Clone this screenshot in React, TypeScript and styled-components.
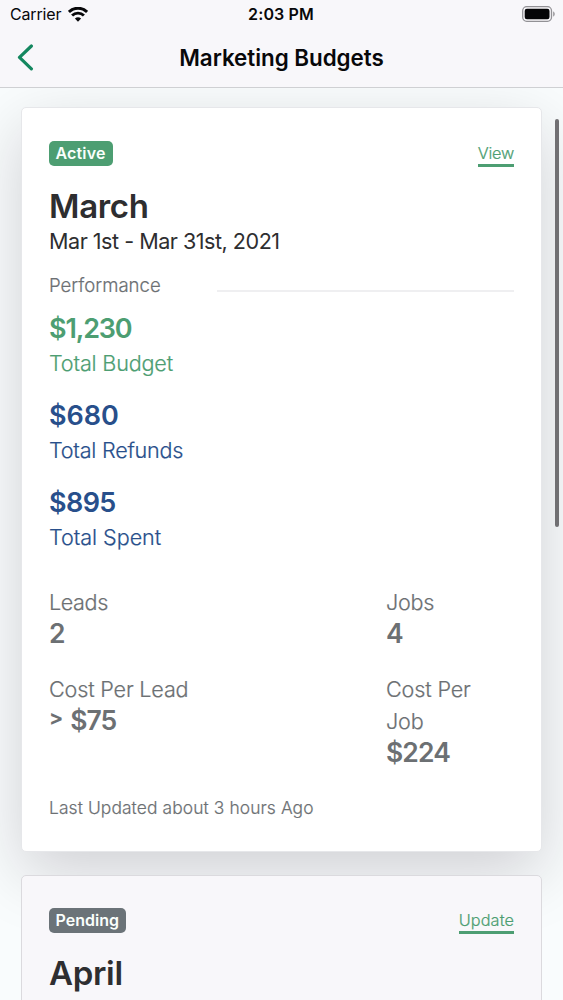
import React from "react";
import styled, { createGlobalStyle } from "styled-components";

const GlobalStyle = createGlobalStyle`
  * { box-sizing: border-box; }
  html, body { margin: 0; height: 1000px; overflow: hidden; background: #f9fcfd; }
  body { font-family: Inter, "Liberation Sans", sans-serif; color: #2e2e30; }
`;

const Screen = styled.div`
  position: relative;
  width: 563px;
  height: 1000px;
  overflow: hidden;
  display: flex;
  flex-direction: column;
`;

const Header = styled.header`
  position: relative;
  z-index: 1;
  flex: none;
  height: 88px;
  background: #f8f7fa;
  border-bottom: 1px solid #cfd0d3;
  color: #08080a;
`;

const StatusBar = styled.div`
  display: grid;
  grid-template-columns: 1fr auto 1fr;
  align-items: center;
  height: 28px;
  padding: 0 7px 0 10px;
  font-size: 16px;
`;

const Carrier = styled.div`
  display: flex;
  align-items: center;
  gap: 7px;
  letter-spacing: -0.15px;
`;

const Time = styled.div`
  position: relative;
  left: -2px;
  font-weight: 600;
  letter-spacing: 0.15px;
`;

const BatterySlot = styled.div`
  display: flex;
  justify-content: flex-end;
`;

const NavBar = styled.nav`
  display: grid;
  grid-template-columns: 60px 1fr 60px;
  align-items: center;
  height: 59px;
`;

const BackButton = styled.button`
  display: flex;
  padding: 0 0 0 17px;
  border: 0;
  background: none;
`;

const Title = styled.h1`
  margin: 0;
  text-align: center;
  font-size: 22.4px;
  font-weight: 600;
  letter-spacing: -0.03px;
`;

const List = styled.main`
  display: flex;
  flex-direction: column;
  gap: 23px;
  padding: 19px 21px 0;
`;

const Card = styled.section<{ $muted?: boolean }>`
  position: relative;
  flex: none;
  padding: ${(p) => (p.$muted ? 32 : 33)}px 27px 30px;
  border: 1px solid ${(p) => (p.$muted ? "#dbdade" : "#e6e7ea")};
  border-radius: 5px;
  background: ${(p) => (p.$muted ? "#f8f7fa" : "#fff")};
  box-shadow: ${(p) => (p.$muted ? "none" : "0 21px 65px rgba(20, 5, 20, 0.175)")};
`;

const CardTop = styled.div`
  display: flex;
  justify-content: space-between;
  height: 25px;
`;

const Badge = styled.span<{ $color: string; $spacing: number }>`
  padding: 0 7px 0 6.5px;
  border-radius: 5px;
  background: ${(p) => p.$color};
  color: #fafffc;
  font-size: 16px;
  font-weight: 600;
  line-height: 25px;
  letter-spacing: ${(p) => p.$spacing}px;
`;

const Action = styled.a<{ $spacing: number }>`
  height: 26px;
  border-bottom: 3px solid #4d9e72;
  color: #4d9e72;
  font-size: 16.3px;
  font-weight: 300;
  -webkit-text-stroke: 0.2px currentColor;
  line-height: 25px;
  letter-spacing: ${(p) => p.$spacing}px;
`;

const Month = styled.h2<{ $spacing: number }>`
  margin: 21px 0 -1px;
  font-size: 33px;
  font-weight: 600;
  line-height: 39px;
  letter-spacing: ${(p) => p.$spacing}px;
`;

const Period = styled.div`
  font-size: 21.6px;
  line-height: 32px;
  letter-spacing: -0.5px;
`;

const SectionHead = styled.div`
  display: grid;
  grid-template-columns: 168px 1fr;
  align-items: center;
  margin: 15px 0 12px;
  font-size: 18.6px;
  font-weight: 300;
  -webkit-text-stroke: 0.2px currentColor;
  line-height: 27px;
  color: #6c7073;
`;

const Rule = styled.div`
  height: 2px;
  margin-top: 11px;
  background: #efeff1;
`;

const Total = styled.div<{ $color: string }>`
  height: 87px;
  color: ${(p) => p.$color};
`;

const Amount = styled.div<{ $spacing: number }>`
  font-size: 27px;
  font-weight: 600;
  line-height: 36px;
  letter-spacing: ${(p) => p.$spacing}px;
`;

const Label = styled.div<{ $spacing: number }>`
  font-size: 21.6px;
  font-weight: 300;
  -webkit-text-stroke: 0.2px currentColor;
  line-height: 32px;
  letter-spacing: ${(p) => p.$spacing}px;
`;

const Stats = styled.div`
  display: grid;
  grid-template-columns: 337px 110px;
  row-gap: 25px;
  margin-top: 14px;
  color: #6c7073;
`;

const Value = styled.div<{ $spacing: number }>`
  display: flex;
  align-items: center;
  font-size: 26.5px;
  font-weight: 600;
  line-height: 30px;
  letter-spacing: ${(p) => p.$spacing}px;
`;

const Comparator = styled.span`
  margin-right: 8px;
  font-size: 21px;
  font-weight: 700;
  line-height: 26px;
  padding-bottom: 4px;
`;

const Updated = styled.div`
  margin-top: 28px;
  font-size: 17.4px;
  font-weight: 300;
  -webkit-text-stroke: 0.2px currentColor;
  line-height: 26px;
  letter-spacing: 0.1px;
  color: #6c7073;
`;

const ScrollThumb = styled.div`
  position: absolute;
  z-index: 2;
  top: 119px;
  right: 4px;
  width: 4px;
  height: 408px;
  border-radius: 2px;
  background: #717073;
`;

const totals = [
  { amount: "$1,230", label: "Total Budget", color: "#4d9e72", a: -1.15, l: -0.18 },
  { amount: "$680", label: "Total Refunds", color: "#284f8b", a: 0, l: -0.24 },
  { amount: "$895", label: "Total Spent", color: "#284f8b", a: -0.6, l: -0.05 },
];

const stats = [
  { label: "Leads", value: "2", a: 0, l: -0.4 },
  { label: "Jobs", value: "4", a: 0, l: -0.3 },
  { label: "Cost Per Lead", prefix: ">", value: "$75", a: -1, l: -0.18 },
  { label: "Cost Per Job", value: "$224", a: -0.9, l: -0.15 },
];

const WifiIcon = () => (
  <svg width="20" height="15" viewBox="0 0 20 15" fill="none" stroke="#08080a" strokeWidth="2.9">
    <path d="M0.9 5a12.8 12.8 0 0 1 18.2 0" />
    <path d="M4.1 8.5a8.4 8.4 0 0 1 11.8 0" />
    <path d="M10 14.8 6.9 11.6a4.5 4.5 0 0 1 6.2 0Z" fill="#08080a" stroke="none" />
  </svg>
);

const BatteryIcon = () => (
  <svg width="34" height="16" viewBox="0 0 34 16">
    <rect x="0.7" y="0.7" width="28.8" height="14.6" rx="4" fill="none" stroke="#929195" strokeWidth="1.3" />
    <rect x="2.7" y="2.7" width="24.8" height="10.6" rx="2.2" fill="#050507" />
    <path d="M31.2 5.5c2 .6 2 4.4 0 5Z" fill="#929195" />
  </svg>
);

const BackIcon = () => (
  <svg width="17" height="27" viewBox="0 0 17 27" fill="none" stroke="#14875f" strokeWidth="3.2" strokeLinecap="round" strokeLinejoin="round">
    <path d="M14.4 2 2.5 13.4 14.4 24.8" />
  </svg>
);

export default function App() {
  return (
    <Screen>
      <GlobalStyle />
      <Header>
        <StatusBar>
          <Carrier>
            Carrier
            <WifiIcon />
          </Carrier>
          <Time>2:03 PM</Time>
          <BatterySlot>
            <BatteryIcon />
          </BatterySlot>
        </StatusBar>
        <NavBar>
          <BackButton aria-label="Back">
            <BackIcon />
          </BackButton>
          <Title>Marketing Budgets</Title>
        </NavBar>
      </Header>
      <List>
        <Card>
          <CardTop>
            <Badge $color="#4d9e72" $spacing={0.15}>Active</Badge>
            <Action $spacing={-0.2}>View</Action>
          </CardTop>
          <Month $spacing={-0.3}>March</Month>
          <Period>Mar 1st - Mar 31st, 2021</Period>
          <SectionHead>
            Performance
            <Rule />
          </SectionHead>
          {totals.map((t) => (
            <Total key={t.label} $color={t.color}>
              <Amount $spacing={t.a}>{t.amount}</Amount>
              <Label $spacing={t.l}>{t.label}</Label>
            </Total>
          ))}
          <Stats>
            {stats.map((s) => (
              <div key={s.label}>
                <Label $spacing={s.l}>{s.label}</Label>
                <Value $spacing={s.a}>
                  {s.prefix && <Comparator>{s.prefix}</Comparator>}
                  {s.value}
                </Value>
              </div>
            ))}
          </Stats>
          <Updated>Last Updated about 3 hours Ago</Updated>
        </Card>
        <Card $muted>
          <CardTop>
            <Badge $color="#6b7378" $spacing={0}>Pending</Badge>
            <Action $spacing={0.1}>Update</Action>
          </CardTop>
          <Month $spacing={-0.3}>April</Month>
        </Card>
      </List>
      <ScrollThumb />
    </Screen>
  );
}
